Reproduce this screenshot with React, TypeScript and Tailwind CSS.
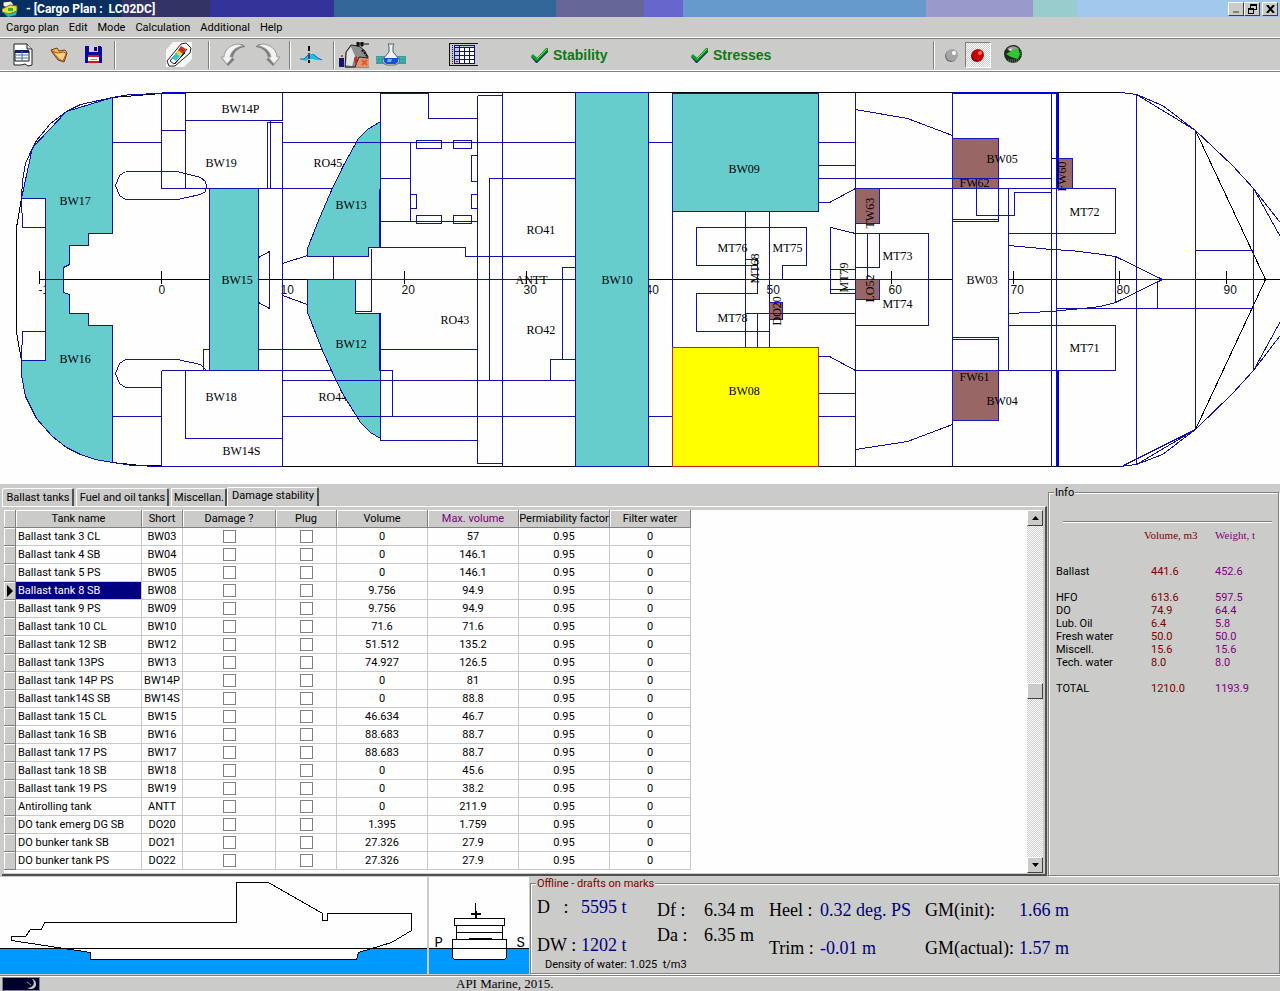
import type { ReactNode } from 'react'

const MENU = ['Cargo plan', 'Edit', 'Mode', 'Calculation', 'Additional', 'Help']

interface Tank { name: string; short: string; volume: string; max: string }
const TANKS: Tank[] = [
  { name: 'Ballast tank 3 CL', short: 'BW03', volume: '0', max: '57' },
  { name: 'Ballast tank 4 SB', short: 'BW04', volume: '0', max: '146.1' },
  { name: 'Ballast tank 5 PS', short: 'BW05', volume: '0', max: '146.1' },
  { name: 'Ballast tank 8 SB', short: 'BW08', volume: '9.756', max: '94.9' },
  { name: 'Ballast tank 9 PS', short: 'BW09', volume: '9.756', max: '94.9' },
  { name: 'Ballast tank 10 CL', short: 'BW10', volume: '71.6', max: '71.6' },
  { name: 'Ballast tank 12 SB', short: 'BW12', volume: '51.512', max: '135.2' },
  { name: 'Ballast tank 13PS', short: 'BW13', volume: '74.927', max: '126.5' },
  { name: 'Ballast tank 14P PS', short: 'BW14P', volume: '0', max: '81' },
  { name: 'Ballast tank14S SB', short: 'BW14S', volume: '0', max: '88.8' },
  { name: 'Ballast tank 15 CL', short: 'BW15', volume: '46.634', max: '46.7' },
  { name: 'Ballast tank 16 SB', short: 'BW16', volume: '88.683', max: '88.7' },
  { name: 'Ballast tank 17 PS', short: 'BW17', volume: '88.683', max: '88.7' },
  { name: 'Ballast tank 18 SB', short: 'BW18', volume: '0', max: '45.6' },
  { name: 'Ballast tank 19 PS', short: 'BW19', volume: '0', max: '38.2' },
  { name: 'Antirolling tank', short: 'ANTT', volume: '0', max: '211.9' },
  { name: 'DO tank emerg DG SB', short: 'DO20', volume: '1.395', max: '1.759' },
  { name: 'DO bunker tank SB', short: 'DO21', volume: '27.326', max: '27.9' },
  { name: 'DO bunker tank PS', short: 'DO22', volume: '27.326', max: '27.9' },
]
const SELECTED = 'BW08'

const TOTALS: (string[] | null)[] = [
  ['Ballast', '441.6', '452.6'],
  null,
  ['HFO', '613.6', '597.5'],
  ['DO', '74.9', '64.4'],
  ['Lub. Oil', '6.4', '5.8'],
  ['Fresh water', '50.0', '50.0'],
  ['Miscell.', '15.6', '15.6'],
  ['Tech. water', '8.0', '8.0'],
  null,
  ['TOTAL', '1210.0', '1193.9'],
]

/* ---------- deck plan ---------- */

const TICKS = [39, 161, 282, 404, 526, 648, 769, 891, 1013, 1119, 1226]
const TICK_LABELS: [number, string][] = [[38, '-10'], [158, '0'], [280, '10'], [401, '20'], [523, '30'], [645, '40'], [766, '50'], [888, '60'], [1010, '70'], [1116, '80'], [1223, '90']]

const LABELS: [number, number, string][] = [
  [59, 204, 'BW17'], [59, 362, 'BW16'], [221, 112, 'BW14P'], [205, 166, 'BW19'], [221, 283, 'BW15'], [205, 400, 'BW18'], [222, 454, 'BW14S'],
  [335, 208, 'BW13'], [335, 347, 'BW12'], [526, 233, 'RO41'], [526, 333, 'RO42'], [440, 323, 'RO43'], [515, 283, 'ANTT'],
  [601, 283, 'BW10'], [728, 172, 'BW09'], [728, 394, 'BW08'], [717, 251, 'MT76'], [772, 251, 'MT75'], [717, 321, 'MT78'],
  [882, 259, 'MT73'], [882, 307, 'MT74'], [986, 162, 'BW05'], [959, 186, 'FW62'], [959, 380, 'FW61'], [986, 404, 'BW04'], [966, 283, 'BW03'],
  [1069, 215, 'MT72'], [1069, 351, 'MT71'],
]
const VERTICAL_LABELS: [number, number, string][] = [[758, 283, 'MT68'], [847, 292, 'MT79'], [780, 325, 'DO20'], [873, 228, 'TW63'], [873, 302, 'LO52'], [1065, 191, 'FW60']]

const STRUCTURE = [
  // stern
  'M21 198L22 180L25 163L30 152L36 140L50 123L66 111L80 104L112 97L130 94L161 93',
  'M21 198H45V227H22L21 198M45 227V331M45 331H22L21 360H45V331',
  'M112 142H161M112 416H161M112 462L132 465L161 466',
  'M125 171H177L200 177L205 181L206 186L205 191L200 194L177 199H125L119 195L115 185L119 175L125 171',
  'M161 387H125L119 383L115 373L119 363L125 359H177L200 364L206 370',
  'M161 92V188H331M185 92V188M161 130H185M185 120H282V92M282 122H267V188M270 120V188M282 122V466',
  'M203 370V349H209M258 349H321M161 370H331M161 370V466H282M185 370V438H282',
  'M258 257L269 251V308L258 302M282 263L307 255M282 295L307 304',
  'M282 142H575M282 380H575M282 416H575',
  // engine rooms
  'M380 92V247M380 313V440H477M380 93H428V118H477M477 95H502M477 95V463H502M502 92V466',
  'M410 142V221M380 178H410M380 221H477M416 140H441V148H416ZM453 140H471V148H453ZM477 155H471V181H477M410 194H416V208H410M477 194H471V208H477M416 215H441V223H416ZM453 215H471V223H453Z',
  'M368 247H465V256H575M333 256V279M371 248V311H355M380 349H477M380 370H392V416',
  'M489 380V178H575M575 267H562V359M550 380V359H575M307 279H575',
  // midship
  'M648 142H672M648 416H672M818 142H855M818 416H855M818 165H855M818 393H855M818 178H1051M672 211V347',
  'M818 202H829L855 188M818 356H829L855 370M855 92V466M745 211V347M769 211V347',
  'M696 265V227H806V265H782V279M696 265H757M745 259H757V293H696V331H769M745 313H855M757 313V347M745 279H782',
  'M855 233L830 227V293H855M830 269H855M830 289H855M855 233H928V325H855M867 233V279M879 233V267H855M855 279H928',
  'M855 109L907 118L952 135M855 449L907 441L952 424',
  // fore
  'M952 92V466M952 219H998M952 221H998V188M952 339H998M952 337H998V370M855 188H1115V233H1008M1008 188V370M976 178V215H1014V192H1051',
  'M1051 92V466M1051 158H1057M1056 92V466M1008 325H1115V370H855',
  'M1008 245L1030 247L1050 249L1070 250L1095 253L1115 256L1162 279L1115 302L1100 306L1082 308L1050 311L1030 312L1008 313M1115 256V302M1056 308H1253M1157 281V308',
  'M1136 94V464M1195 130V429M1253 188V370M1195 250H1253M1136 279H1195',
  'M1120 92L1136 94L1162 105L1195 130L1232 165L1253 188L1282 225M1136 94L1195 130M1253 188L1282 240',
  'M1120 466L1136 464L1162 454L1195 429L1232 393L1253 370L1282 332M1136 464L1195 429M1123 465L1195 429M1253 370L1282 317',
].join('')

const TEAL = [
  'M112 97V233H88V245H69V264L63 267V279H45V198H21L32 147L66 111Z',
  'M45 279H63V292L69 294V313H88V325H112V462L95 459L80 454L66 447L52 436L36 418L25 396L21 375V360H45Z',
  'M209 188H258V370H209Z',
  'M380 121L367 129L358 138L343 165L330 192L318 220L307 248V256H368V247H380Z',
  'M307 279H355V313H380V438L370 432L360 422L342 393L331 370L322 350L307 312Z',
  'M575 92H648V466H575Z',
  'M672 93H818V211H672Z',
].join('')

const BROWN = 'M769 302H782V319H769ZM855 188H879V223H855ZM855 279H879V299H855ZM952 138H998V188H952ZM952 370H998V420H952ZM1057 158H1072V188H1057Z'

function DeckPlan() {
  return (
    <svg viewBox="-0.5 71.5 1280 412" className="block w-full bg-[#fefefe]" shapeRendering="crispEdges" fill="none" fontFamily="'Liberation Serif', serif" fontSize="12" role="img" aria-label="Deck plan">
      <path d="M39 279H307M648 279H952M1008 279H1280" stroke="#000" />
      {TICKS.map(x => <path key={x} d={`M${x} 270V283`} stroke="#000" />)}
      <g fill="#111" fontFamily="'Liberation Sans', sans-serif" fontSize="12">
        {TICK_LABELS.map(([x, t]) => <text key={t} x={x} y={293}>{t}</text>)}
      </g>
      <g fill="#000">
        <text x={313} y={166}>RO45</text>
        <text x={318} y={400}>RO44</text>
      </g>
      <path d="M46 280H62V300H46Z" fill="#66cccc" />
      <path d={BROWN} fill="#996666" />
      <path d={TEAL} fill="#66cccc" />
      <path d="M161 93L112 97L66 111L32 147L21 198L16 227V332L21 360M112 462L140 465H161M161 92H1123M161 466H1123M1195 130L1265 279L1195 429" stroke="#000" />
      <path d={STRUCTURE} stroke="#1111a8" />
      <path d={TEAL} stroke="#1111a8" />
      <path d={BROWN} stroke="#1a1abb" />
      <path d="M952 92H1056M161 92H185M1057 92V188M1057 370V466" stroke="#0000dd" strokeWidth="2" />
      <path d="M379 188V247M379 313V370" stroke="#1111a8" strokeWidth="2" />
      <path d="M672 347H818V466H672Z" fill="#ffff00" stroke="#cc2200" />
      <g fill="#000">
        {LABELS.map(([x, y, t]) => <text key={t} x={x} y={y}>{t}</text>)}
        {VERTICAL_LABELS.map(([x, y, t]) => <text key={t} transform={`translate(${x} ${y}) rotate(-90)`}>{t}</text>)}
      </g>
    </svg>
  )
}

/* ---------- toolbar ---------- */

function Sep({ className = '' }: { className?: string }) {
  return <div className={`h-7 w-[2px] shrink-0 border-l border-r border-l-[#808080] border-r-white ${className}`} />
}

function Tool({ label, className = '', children }: { label: string; className?: string; children: ReactNode }) {
  return <button aria-label={label} className={`flex h-7 shrink-0 items-center justify-center ${className}`}>{children}</button>
}

const NewIcon = () => (
  <svg width="20" height="24" viewBox="0 0 20 24"><path d="M1 1H14L19 6V22L15 23L12 21L8 22H1Z" fill="#fff" stroke="#222" /><path d="M14 1V6H19" fill="#ddd" stroke="#222" /><path d="M2 8H16V18H2Z" fill="#fff" stroke="#111" /><path d="M2 7H16V10H2Z" fill="#0a246a" /><path d="M9 8V18M3 12H15M3 15H15" stroke="#3a6ea5" /></svg>
)
const OpenIcon = () => (
  <svg width="18" height="16" viewBox="0 0 18 16"><path d="M1 3L7 1L9 4L15 3L17 6L14 15L8 13L2 5Z" fill="#f4b860" stroke="#6b3d0c" /><path d="M2 4L7 6L14 5L16 7L13 14L9 12Z" fill="#ffce85" stroke="#9a5c1a" /></svg>
)
const SaveIcon = () => (
  <svg width="17" height="17" viewBox="0 0 17 17" shapeRendering="crispEdges"><path d="M0 0H15L17 2V17H0Z" fill="#0a0a9c" /><path d="M4 0H13V6H4Z" fill="#c8d0e8" /><path d="M9 1H12V5H9Z" fill="#0a0a60" /><path d="M3 9H14V17H3Z" fill="#fff" /><path d="M3 9H14V11H3ZM3 15H14V17H3Z" fill="#d01818" /><path d="M5 13H12" stroke="#d88" /></svg>
)
const EraserIcon = () => (
  <svg width="26" height="25" viewBox="0 0 26 25"><path d="M7 0H26V17L18 25H0V8Z" fill="#f6f6f6" /><path d="M1 19L15 2L20 1L25 6L24 11L9 24H3Z" fill="#fff" stroke="#222" /><path d="M4 19L14 7L19 11L8 22Z" fill="#fff" stroke="#222" /><path d="M6 16L10 11L14 14L10 19Z" fill="#35c5cf" /><path d="M10 11L12 8L17 12L14 14Z" fill="#ead43a" /><path d="M12 8L15 4L20 7L17 12Z" fill="#c83222" /><path d="M21 7L9 22" stroke="#222" /></svg>
)
const UndoIcon = ({ flip = false }: { flip?: boolean }) => (
  <svg width="26" height="24" viewBox="0 0 26 24" className={flip ? '-scale-x-100' : ''}><path d="M8 23L2 16H5C5 8 12 2 20 1C23 1 25 3 25 4C18 5 13 9 13 16H15Z" fill="#7c7c7c" /><path d="M7 21L1 14H4C4 7 11 1 19 1L23 3C15 4 11 9 10 14H13Z" fill="#f3f3f3" stroke="#9c9c9c" /></svg>
)
const HeelIcon = () => (
  <svg width="22" height="18" viewBox="0 0 22 18"><path d="M0 13H4L9 8H13L18 12L22 14H16L13 13H9L6 15Z" fill="#18bdf0" /><path d="M0 13H4L9 8M13 8L18 12L22 14" stroke="#0a6cc0" fill="none" /><path d="M9 0V17" stroke="#111" strokeWidth="2" strokeDasharray="5 2" /><path d="M8 7H10V13H8Z" fill="#445" /></svg>
)
const CargoIcon = () => (
  <svg width="31" height="26" viewBox="0 0 31 26"><path d="M6 14H30V26H6Z" fill="#3fa9b5" /><path d="M17 14H30V25H17Z" fill="#d99a72" /><path d="M6 25L7 10L12 3L20 4L26 9L29 16L20 15L16 25Z" fill="#8d8d8d" stroke="#222" /><path d="M7 23L8 10L12 5L16 14L13 24Z" fill="#e4e4e4" /><path d="M18 0H20V4H18ZM22 0H24V4H22ZM19 2H30" stroke="#111" strokeWidth="1" fill="#111" /><path d="M23 8L29 15" stroke="#111" strokeWidth="2" strokeDasharray="2 1" /><path d="M0 16H5V25H0Z" fill="#15156e" /><circle cx="3" cy="14" r="1" fill="#b22" /><path d="M15 16L18 14V22H16Z" fill="#c92a1a" /><path d="M23 18L28 23M28 18L23 23" stroke="#e8552f" strokeWidth="2" /></svg>
)
const FlaskIcon = () => (
  <svg width="30" height="23" viewBox="0 0 30 23"><path d="M0 13H30V21H0Z" fill="#3b9c9c" /><path d="M0 15H30M0 18H30" stroke="#55c0c0" strokeDasharray="2 1" /><path d="M12 1H18L17 3V9L23 16C24 20 21 22 18 22H12C9 22 6 20 7 16L13 9V3Z" fill="#eaf4fa" stroke="#566" /><path d="M8 15H22C23 19 21 21 18 21H12C9 21 7 19 8 15Z" fill="#1554cc" /><path d="M12 16H16L15 19H11Z" fill="#6fb4ff" /></svg>
)
const GridIcon = () => (
  <svg width="29" height="23" viewBox="0 0 29 23" shapeRendering="crispEdges"><path d="M0 0H29V1H1V22H29V23H0Z" fill="#111" /><path d="M3 2H4V3H3ZM3 4H4V5H3ZM3 6H4V7H3ZM3 8H4V9H3ZM3 10H4V11H3ZM3 12H4V13H3ZM3 14H4V15H3ZM3 16H4V17H3ZM3 18H4V19H3ZM3 20H4V21H3Z" fill="#10108c" /><path d="M5 2H26V21H5Z" fill="#10108c" /><path d="M6 3H10V4H6ZM11 3H25V4H11Z" fill="#c8d0e8" /><path d="M6 5H10V8H6ZM6 9H10V12H6ZM6 13H10V16H6ZM6 17H10V20H6Z" fill="#c4c8f0" /><path d="M11 5H15V8H11ZM16 5H20V8H16ZM21 5H25V8H21ZM11 9H15V12H11ZM16 9H20V12H16ZM21 9H25V12H21ZM11 13H15V16H11ZM16 13H20V16H16ZM21 13H25V16H21ZM11 17H15V20H11ZM16 17H20V20H16ZM21 17H25V20H21Z" fill="#fff" /><path d="M7 18H9V19H7Z" fill="#c00" /></svg>
)
const Check = () => (
  <svg width="17" height="15" viewBox="0 0 17 15" className="shrink-0"><path d="M0 9L2 7L6 10L15 1L17 2V4L6 15H5Z" fill="#0b3b4a" /><path d="M0 8L2 6L6 10L15 0H17V2L6 13H5Z" fill="#12a022" /><path d="M6 11L16 1" stroke="#5fe05a" /></svg>
)
function Ball({ light, mid, dark }: { light: string; mid: string; dark: string }) {
  return <svg width="14" height="14" viewBox="0 0 14 14"><circle cx="6" cy="8" r="6" fill={dark} /><circle cx="7" cy="7" r="6" fill={mid} /><circle cx="9" cy="5" r="2" fill={light} /></svg>
}
const GlobeIcon = () => (
  <svg width="19" height="19" viewBox="0 0 19 19"><circle cx="9" cy="9" r="9" fill="#1d2a1d" /><path d="M3 4A8 8 0 0 1 15 4L9 7Z" fill="#9a9a9a" /><path d="M2 9L7 6L14 3L16 9L14 14L7 12Z" fill="#2fc92f" /><path d="M4 5L8 3L7 6Z" fill="#e8e8e8" /><path d="M4 15H15M6 17H13M17 6V12" stroke="#7a8a7a" strokeDasharray="1 1" /></svg>
)

function Toolbar() {
  return (
    <div className="flex h-[35px] items-center border-y border-t-white border-b-[#808080] shadow-[inset_0_1px_0_#808080,inset_0_-1px_0_#fff] pl-2" role="toolbar">
      <Tool label="New" className="w-[30px]"><NewIcon /></Tool>
      <Tool label="Open" className="ml-1 w-[34px]"><OpenIcon /></Tool>
      <Tool label="Save" className="w-[34px]"><SaveIcon /></Tool>
      <Sep className="ml-1" />
      <Tool label="Clear" className="ml-[46px] w-[34px]"><EraserIcon /></Tool>
      <Sep className="ml-3" />
      <Tool label="Undo" className="ml-2 w-[30px]"><UndoIcon /></Tool>
      <Tool label="Redo" className="ml-[5px] w-[30px]"><UndoIcon flip /></Tool>
      <Sep className="ml-[6px]" />
      <Tool label="Heel" className="ml-[5px] w-[30px]"><HeelIcon /></Tool>
      <Sep className="ml-[7px]" />
      <Tool label="Cargo" className="ml-1 w-[31px]"><CargoIcon /></Tool>
      <Tool label="Liquids" className="ml-[6px] w-[30px]"><FlaskIcon /></Tool>
      <Tool label="Tables" className="ml-[43px] w-[29px]"><GridIcon /></Tool>
      <div className="ml-[53px] flex w-40 items-center gap-[5px] pt-px text-[14px] font-bold text-[#0f7a12]"><Check />Stability</div>
      <div className="flex w-[242px] items-center gap-[5px] pt-px text-[14px] font-bold text-[#0f7a12]"><Check />Stresses</div>
      <Sep />
      <Tool label="Off" className="ml-1 w-[26px]"><Ball light="#fff" mid="#a4a4a4" dark="#6f6f6f" /></Tool>
      <button aria-label="Record" aria-pressed="true" className="flex size-[26px] items-center justify-center border border-t-[#808080] border-r-white border-b-white border-l-[#808080] bg-[repeating-conic-gradient(#fff_0_25%,#cbcbc9_0_50%)] bg-size-[2px_2px]">
        <Ball light="#ff6a5a" mid="#c80000" dark="#7a0000" />
      </button>
      <Tool label="Online" className="ml-[7px] w-[30px]"><GlobeIcon /></Tool>
    </div>
  )
}

/* ---------- window chrome ---------- */

const BEVEL = 'border border-t-white border-l-white border-r-[#404040] border-b-[#404040] bg-[#cbcbc9]'

function TitleBar() {
  return (
    <header className="flex h-[17px] items-center bg-[linear-gradient(90deg,#063061_0_122px,#333366_122px_210px,#333399_210px_334px,#336699_334px_556px,#666699_556px_644px,#6666cc_644px_683px,#6699cc_683px_926px,#9999cc_926px_1033px,#99cccc_1033px_1077px,#a2c8ee_1077px)] pr-[2px] pl-[2px]">
      <svg width="16" height="16" viewBox="0 0 16 16"><path d="M1 1L9 0L12 4L5 7L1 5Z" fill="#f4f4e4" stroke="#222" /><path d="M0 8L8 4L15 5V10L7 13L0 11Z" fill="#f2e21c" stroke="#665" /><path d="M1 11L8 13L15 10L14 14L6 16Z" fill="#2bb7a4" /><path d="M6 7H11V10H6Z" fill="#2fae48" /></svg>
      <h1 className="ml-2 whitespace-pre font-[Roboto,sans-serif] text-[12px] leading-[16px] font-bold text-white">- [Cargo Plan :  LC02DC]</h1>
      <div className="ml-auto flex">
        <button aria-label="Minimize" className={`flex h-[14px] w-4 items-end justify-center pb-[2px] ${BEVEL}`}><span className="h-[2px] w-[6px] bg-[#808080]" /></button>
        <button aria-label="Restore" className={`flex h-[14px] w-4 items-center justify-center ${BEVEL}`}>
          <svg width="9" height="10" viewBox="0 0 9 10" shapeRendering="crispEdges" fill="none" stroke="#000"><path d="M2.5 4V.5H8.5V5.5H6M2 1.5H9M.5 4.5H5.5V9.5H.5ZM0 5.5H6" /></svg>
        </button>
        <button aria-label="Close" className={`ml-[2px] flex h-[14px] w-4 items-center justify-center ${BEVEL}`}>
          <svg width="9" height="8" viewBox="0 0 9 8" stroke="#000" strokeWidth="2"><path d="M1 0L8 8M8 0L1 8" /></svg>
        </button>
      </div>
    </header>
  )
}

function Tab({ children, active = false, className }: { children: ReactNode; active?: boolean; className: string }) {
  return (
    <button role="tab" aria-selected={active} className={`rounded-t-xs border-t border-r-2 border-l border-t-white border-r-[#505050] border-l-white pl-px text-center whitespace-nowrap ${active ? 'h-[19px] pb-[2px]' : 'h-[18px] pt-px'} ${className}`}>{children}</button>
  )
}

function TankTable() {
  const th = 'h-[18px] border-r border-b border-[#808080] p-0 font-normal shadow-[inset_1px_1px_0_#fff] bg-[#cbcbc9]'
  const td = 'h-[18px] border-r border-b border-[#c8c8c8] p-0 text-center'
  return (
    <table className="w-[687px] shrink-0 table-fixed border-separate border-spacing-0 leading-[17px] whitespace-nowrap">
      <colgroup>
        <col className="w-[12px]" /><col className="w-[126px]" /><col className="w-[41px]" /><col className="w-[93px]" /><col className="w-[61px]" />
        <col className="w-[91px]" /><col className="w-[91px]" /><col className="w-[91px]" /><col className="w-[81px]" />
      </colgroup>
      <thead>
        <tr>
          <th className={th} /><th className={th}>Tank name</th><th className={th}>Short</th><th className={th}>Damage ?</th><th className={th}>Plug</th>
          <th className={th}>Volume</th><th className={`${th} text-[#80007a]`}>Max. volume</th><th className={th}>Permiability factor</th><th className={th}>Filter water</th>
        </tr>
      </thead>
      <tbody>
        {TANKS.map(t => (
          <tr key={t.short}>
            <td className={th}>
              {t.short === SELECTED && <svg width="6" height="12" viewBox="0 0 6 12" className="ml-[3px]"><path d="M0 0L6 6L0 12Z" /></svg>}
            </td>
            <td className={`h-[18px] border-r border-b border-[#c8c8c8] p-0 pl-[2px] ${t.short === SELECTED ? 'bg-[#000080] text-white' : ''}`}>{t.name}</td>
            <td className={td}>{t.short}</td>
            <td className={td}><input type="checkbox" aria-label={`${t.name} damage`} className="block mx-auto size-[13px] appearance-none border border-[#808080] bg-white" /></td>
            <td className={td}><input type="checkbox" aria-label={`${t.name} plug`} className="block mx-auto size-[13px] appearance-none border border-[#808080] bg-white" /></td>
            <td className={td}>{t.volume}</td>
            <td className={td}>{t.max}</td>
            <td className={td}>0.95</td>
            <td className={td}>0</td>
          </tr>
        ))}
      </tbody>
    </table>
  )
}

function ScrollBar() {
  return (
    <div className="flex w-4 shrink-0 flex-col bg-[repeating-conic-gradient(#fff_0_25%,#cbcbc9_0_50%)] bg-size-[2px_2px]">
      <button aria-label="Scroll up" className={`flex h-4 items-center justify-center ${BEVEL}`}><svg width="7" height="4" viewBox="0 0 7 4"><path d="M0 4L3.5 0L7 4Z" /></svg></button>
      <div className="grow-[157]" />
      <div className={`h-4 ${BEVEL}`} />
      <div className="grow-[158]" />
      <button aria-label="Scroll down" className={`flex h-4 items-center justify-center ${BEVEL}`}><svg width="7" height="4" viewBox="0 0 7 4"><path d="M0 0L3.5 4L7 0Z" /></svg></button>
    </div>
  )
}

const GROUP = 'border border-[#808080] shadow-[1px_1px_0_#fff,inset_1px_1px_0_#fff]'

function InfoPanel() {
  return (
    <fieldset className={`mt-[2px] mr-px ml-px w-[231px] shrink-0 ${GROUP}`}>
      <legend className="ml-[5px] bg-[#cbcbc9] px-px leading-[13px]">Info</legend>
      <hr className="mt-[22px] mr-[6px] ml-[14px] border-t border-b border-t-[#808080] border-b-white" />
      <table className="ml-[7px] w-[216px] table-fixed border-separate border-spacing-0 leading-[13px]">
        <colgroup><col className="w-[95px]" /><col className="w-[64px]" /><col /></colgroup>
        <thead>
          <tr className="font-['Liberation_Serif',serif] text-left align-top">
            <td className="h-[42px] p-0" />
            <th className="p-0 pt-[6px] font-normal whitespace-nowrap text-[#800000]"><span className="-ml-[7px]">Volume, m3</span></th>
            <th className="p-0 pt-[6px] font-normal whitespace-nowrap text-[#800080]">Weight, t</th>
          </tr>
        </thead>
        <tbody>
          {TOTALS.map((row, i) => row ? (
            <tr key={i}>
              <th className="h-[13px] p-0 text-left font-normal">{row[0]}</th>
              <td className="p-0 text-[#800000]">{row[1]}</td>
              <td className="p-0 text-[#800080]">{row[2]}</td>
            </tr>
          ) : <tr key={i}><td className="h-[13px] p-0" colSpan={3} /></tr>)}
        </tbody>
      </table>
    </fieldset>
  )
}

function Profile() {
  return (
    <svg width="427" height="97" viewBox="-0.5 876.5 427 97" className="shrink-0 bg-[#fefefe]" shapeRendering="crispEdges" role="img" aria-label="Ship profile">
      <path d="M-1 948H428V974H-1Z" fill="#0099ff" />
      <path d="M11 936H25L30 929H41L44 922H236V882H268L322 913V920H327V913H411V930L391 942L358 952L356 959H90V952L11 940Z" fill="#fefefe" stroke="#000" />
      <path d="M-1 948H428" stroke="#000" />
    </svg>
  )
}

function FrontView() {
  return (
    <svg width="100" height="97" viewBox="428.5 876.5 100 97" className="ml-[2px] shrink-0 bg-[#fefefe]" shapeRendering="crispEdges" role="img" aria-label="Front view">
      <path d="M428 948H530V974H428Z" fill="#0099ff" />
      <path d="M452 939H506V957L504 959H454L452 957ZM456 925H502V939H456ZM456 932H502M454 918H504V925H454Z" fill="#fefefe" stroke="#000" />
      <path d="M428 948H530M468 938H491M475 902V918" stroke="#000" />
      <path d="M470 913H480M475 910V917" stroke="#000" strokeWidth="2" />
      <g fontFamily="'Liberation Mono', monospace" fontSize="14"><text x="434" y="946">P</text><text x="516" y="946">S</text></g>
    </svg>
  )
}

function Readout({ rows, className }: { rows: [string, string, boolean?][]; className: string }) {
  return (
    <dl className={`grid content-start leading-[20px] whitespace-nowrap ${className}`}>
      {rows.map(([k, v, plain]) => (
        <div key={k} className="contents"><dt className="whitespace-pre">{k}</dt><dd className={plain ? '' : 'text-[#000080]'}>{v}</dd></div>
      ))}
    </dl>
  )
}

export default function App() {
  return (
    <div className="min-w-[1280px] bg-[#cbcbc9] font-['Liberation_Sans',Arial,sans-serif] text-[11px] text-black">
      <TitleBar />
      <nav className="flex h-5 items-center gap-[10px] pt-px pl-[6px]">
        {MENU.map(m => <button key={m} className="leading-[18px] font-[Roboto,sans-serif]">{m}</button>)}
      </nav>
      <Toolbar />
      <DeckPlan />

      <main className="flex font-[Roboto,sans-serif]">
        <section className="flex min-w-0 flex-1 flex-col pt-[3px] pl-[2px]">
          <div role="tablist" className="flex items-end">
            <Tab className="w-[72px]">Ballast tanks</Tab>
            <Tab className="ml-[2px] w-[93px]">Fuel and oil tanks</Tab>
            <Tab className="ml-[2px] w-[56px]">Miscellan.</Tab>
            <Tab className="w-[92px]" active>Damage stability</Tab>
          </div>
          <div className="flex border-t border-r-2 border-b-2 border-t-white border-r-[#505050] border-b-[#505050] px-[2px] pt-[3px] pb-px">
            <div className="flex flex-1 bg-[#fefefe] pb-[3px]"><TankTable /></div>
            <ScrollBar />
          </div>
        </section>
        <InfoPanel />
      </main>

      <section className="flex pt-px font-[Roboto,sans-serif]">
        <Profile />
        <FrontView />
        <fieldset className={`ml-px min-w-0 flex-1 ${GROUP}`}>
          <legend className="ml-[5px] bg-[#cbcbc9] px-px leading-[13px] text-[#800000]">Offline - drafts on marks</legend>
          <div className="flex items-start pl-[6px] font-['Liberation_Serif',serif] text-[18px]">
            <Readout className="w-[120px] grid-cols-[44px_auto] gap-y-[18px] pt-[7px]" rows={[['D   :', '5595 t'], ['DW :', '1202 t']]} />
            <Readout className="w-[112px] grid-cols-[47px_auto] gap-y-[5px] pt-[10px]" rows={[['Df :', '6.34 m', true], ['Da :', '6.35 m', true]]} />
            <Readout className="w-[156px] grid-cols-[51px_auto] gap-y-[18px] pt-[10px]" rows={[['Heel :', '0.32 deg. PS'], ['Trim :', '-0.01 m']]} />
            <Readout className="grid-cols-[94px_auto] gap-y-[18px] pt-[10px]" rows={[['GM(init):', '1.66 m'], ['GM(actual):', '1.57 m']]} />
          </div>
          <p className="ml-[14px] leading-[13px] whitespace-pre">Density of water: 1.025  t/m3</p>
        </fieldset>
      </section>

      <div className="pt-px">
        <footer className="flex h-4 items-center border-t border-[#808080] pl-[2px] shadow-[inset_0_1px_0_#fff]">
          <svg width="38" height="14" viewBox="0 0 38 14"><path d="M0 0H38V14H0Z" fill="#808080" /><path d="M1 1H37V13H1Z" fill="#00002e" /><path d="M30 2C34 6 31 11 25 11C29 13 34 12 34 7C34 4 32 2 30 2Z" fill="#c8c8c8" /><path d="M25 5L29 8" stroke="#999" /></svg>
          <p className="ml-[416px] font-['Liberation_Serif',serif] text-[13px] leading-[14px]">API Marine, 2015.</p>
        </footer>
      </div>
    </div>
  )
}
